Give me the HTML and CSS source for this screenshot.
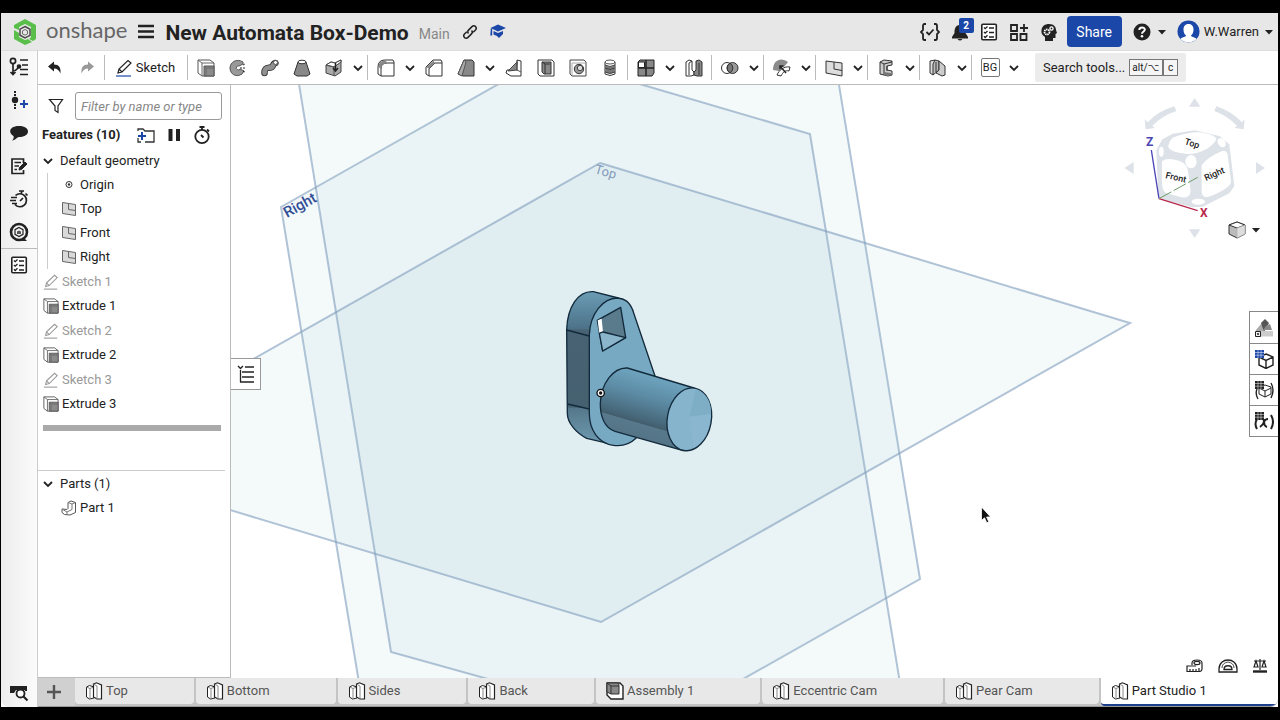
FILE: index.html
```html
<!DOCTYPE html>
<html lang="en">
<head>
<meta charset="utf-8">
<title>New Automata Box-Demo</title>
<link rel="stylesheet" href="styles.css">
</head>
<body>
<svg class="sprite" aria-hidden="true">
  <defs>
    <symbol id="chev" viewBox="0 0 12 12"><path d="M2 4l4 4 4-4" fill="none" stroke="#222" stroke-width="1.800"/></symbol>
    <symbol id="caret" viewBox="0 0 8 8"><path d="M0 2h8L4 6.500z" fill="#222"/></symbol>
    <symbol id="plane" viewBox="0 0 16 16"><path d="M1.500 1.500l13 2v11l-13-2z" fill="#d9d9d9" stroke="#666"/><path d="M7.500 2.500v6l7 1" fill="none" stroke="#666"/></symbol>
    <symbol id="extrude" viewBox="0 0 18 18"><path d="M1 1h12l4 3v13H5l-4-3z" fill="#fff" stroke="#555"/><path d="M1 1l4 3h12M5 4v13" fill="none" stroke="#666"/><path d="M7 7h10v10H7z" fill="#8b8b8b" stroke="#555"/><path d="M7 7l2 2h8M9 9v8" fill="none" stroke="#666"/></symbol>
    <symbol id="pencil" viewBox="0 0 18 18"><path d="M3 14l1-4L13 1.500l3 2.500-9 9zM4 10l3 3" fill="#fff" stroke="currentColor" stroke-width="1.200"/><path d="M1 17h15" stroke="var(--line, currentColor)" stroke-width="1.200"/></symbol>
    <symbol id="studio" viewBox="0 0 18 18"><path d="M1.500 5l3-1.500L9 5v11l-4.500 1-3-2z" fill="#fff" stroke="#222"/><path d="M1.500 5L5 6.500V17M5 6.500L9 5" fill="none" stroke="#888"/><path d="M8.500 2l3-1.200L16.500 3v14h-4.500l-3.500-2z" fill="#fff" stroke="#222" stroke-width="1.200"/><path d="M8.500 2L12 4v13" fill="none" stroke="#888"/></symbol>
    <symbol id="checklist" viewBox="0 0 18 18"><rect x="1.800" y="1.300" width="14.500" height="15.500" rx="1" fill="#fff" stroke="#222" stroke-width="1.600"/><path d="M4 4.500l1.200 1.200L7.500 3.500M4 9l1.200 1.200L7.500 8M4 13.300l1.200 1.200 2.300-2.200" fill="none" stroke="#222" stroke-width="1.300"/><path d="M9 5h5M9 9.500h5M9 14h5" stroke="#222" stroke-width="1.500"/></symbol>
    <symbol id="watch" viewBox="0 0 20 20"><circle cx="10" cy="11.500" r="6.700" fill="none" stroke="#222" stroke-width="1.800"/><path d="M7.500 2h5M10 2v3M15 4.500l2 2M9 10l2.500 2.500" stroke="#222" stroke-width="1.800"/></symbol>
  </defs>
</svg>

<div class="app">
  <header class="header">
    <a class="brand" href="#" aria-label="Onshape home">
      <svg width="26" height="28" viewBox="0 0 26 28"><path d="M13 1l11 6v14l-3 2-4-2 2-2V9l-6-3-6 3v3L2 10V7z" fill="#59bf4a"/><path d="M2 12l5 3v4l6 3 3-1 4 3-7 3L2 21z" fill="#59bf4a"/><path d="M13 8.500l5 2.800v6L13 20l-5-2.800v-6z" fill="#e7e7e7" stroke="#4a4a4a" stroke-width="1.500"/><path d="M13 11.500l2.500 1.400v3L13 17.200l-2.500-1.300v-3z" fill="none" stroke="#666"/></svg>
      <span class="brand-name">onshape</span>
    </a>
    <button class="icon-btn menu" aria-label="Menu"><svg width="18" height="18" viewBox="0 0 18 18"><path d="M1 3h16M1 8.500h16M1 14h16" stroke="#222" stroke-width="2.400"/></svg></button>
    <h1 class="title">New Automata Box-Demo</h1>
    <span class="branch">Main</span>
    <button class="icon-btn link" aria-label="Copy link"><svg width="16" height="16" viewBox="0 0 16 16" fill="none" stroke="#222" stroke-width="1.500"><path d="M6.500 9.500c-1-1-1-2.400 0-3.400l3.500-3.500c1-1 2.600-1 3.500 0s1 2.400 0 3.400L11.200 8.300"/><path d="M9.500 6.500c1 1 1 2.400 0 3.400L6 13.400c-1 1-2.600 1-3.500 0s-1-2.400 0-3.400l2.300-2.300"/></svg></button>
    <button class="icon-btn" aria-label="Learning center"><svg width="18" height="18" viewBox="0 0 18 18" fill="#1b47a8"><path d="M9 1.500l8 3.500-8 3.500L1.500 5z"/><path d="M4.500 8L9 10l5-2v3l-4 4-2-2-3.500-1.500zM1.800 5.500h1.400v7H1.300z"/></svg></button>
    <div class="header-tools">
      <button class="icon-btn" aria-label="Checks"><svg width="20" height="20" viewBox="0 0 20 20" fill="none" stroke="#222" stroke-width="1.800"><path d="M6 2H4.500Q3 2 3 4v4L1 10l2 2v4q0 2 1.500 2H6M14 2h1.500Q17 2 17 4v4l2 2-2 2v4q0 2-1.500 2H14"/><path d="M6.500 10l2.500 2.500 4.500-5"/></svg></button>
      <button class="icon-btn bell" aria-label="Notifications, 2 new"><svg width="18" height="20" viewBox="0 0 18 20" fill="#222"><path d="M8 2c1-1 2 0 2 1 4 1 4.500 4 4.500 8l2.500 4v1.500H1V15l2.500-4C3.500 7 4 4 8 3zM6.500 17h5q-2.500 3-5 0z"/></svg><span class="badge">2</span></button>
      <button class="icon-btn" aria-label="Tasks"><svg width="18" height="18"><use href="#checklist"/></svg></button>
      <button class="icon-btn" aria-label="App store"><svg width="20" height="20" viewBox="0 0 20 20" fill="none" stroke="#222" stroke-width="1.800"><path d="M2 3h6v6H2zM2 12h6v6H2zM11.500 12h6v6h-6zM11 6h8M15 2v8"/></svg></button>
      <button class="icon-btn" aria-label="Advisor"><svg width="18" height="20" viewBox="0 0 18 20"><path d="M9 2c5 0 7 3 7 6l1 3-1.500 1v4H13v3H5v-4C2 13 1 11 1.500 8 2 4 5 2 9 2z" fill="#222"/><circle cx="7" cy="10" r="2.500" fill="none" stroke="#fff" stroke-width="1.800" stroke-dasharray="1.500 .6"/><circle cx="11.500" cy="6.500" r="1.600" fill="none" stroke="#fff" stroke-width="1.300"/></svg></button>
      <button class="share">Share</button>
      <button class="help" aria-label="Help"><svg width="18" height="18" viewBox="0 0 18 18"><circle cx="9" cy="9" r="8.500" fill="#222"/><path d="M6.300 7c0-3.500 5.500-3.300 5.500-.3C11.800 8.500 9 8.500 9 10.800" fill="none" stroke="#fff" stroke-width="2"/><circle cx="9" cy="13.300" r="1.300" fill="#fff"/></svg><svg width="8" height="8"><use href="#caret"/></svg></button>
      <button class="user"><svg width="23" height="23" viewBox="0 0 23 23"><circle cx="11.500" cy="11.500" r="11" fill="#1b47a8"/><path d="M11.500 4c7 0 5.500 10 2.500 11.500 0 1.500 4 1.500 5.500 3.500-4 4.500-12 4.500-16 0 1.500-2 5.500-2 5.500-3.500C6 14 4.500 4 11.500 4z" fill="#fff"/></svg><span>W.Warren</span><svg width="8" height="8"><use href="#caret"/></svg></button>
    </div>
  </header>

  <nav class="rail" aria-label="Side panels">
    <button class="rail-btn first" aria-label="Feature list"><svg width="20" height="20" viewBox="0 0 20 20" fill="none" stroke="#222" stroke-width="1.700"><circle cx="4" cy="4" r="2.600"/><path d="M4 7v10M4 14c4 0 4-3 7-5M1.500 15L4 17.500 6.500 15M11 3h8M13 8h6M11 12.500h8M11 17.500h8"/><circle cx="10" cy="9.500" r="1.500" fill="#222"/></svg></button>
    <button class="rail-btn" aria-label="Add variable"><svg width="20" height="20" viewBox="0 0 20 20"><path d="M6 1v2M6 4v2M6 14v2M6 17v2" stroke="#222" stroke-width="2"/><circle cx="6" cy="10" r="3.200" fill="#222"/><path d="M11 14h8M15 10v8" stroke="#1b47a8" stroke-width="2"/></svg></button>
    <button class="rail-btn" aria-label="Comments"><svg width="20" height="18" viewBox="0 0 20 18"><path d="M10 2c12 0 12 11 0 11-2 0-3 3-7 3.500 1.500-1.500 2-3 1.500-4.500C-1 9 0 2 10 2z" fill="#222"/></svg></button>
    <button class="rail-btn" aria-label="Notes"><svg width="18" height="18" viewBox="0 0 18 18" fill="none" stroke="#222" stroke-width="1.700"><path d="M13.500 6V2H2v14.500h11.500V13M4.500 5.500H11M4.500 9H9M4.500 12.500H7"/><path d="M9 13l.5-2.500L15 5l2 2-5.500 5.500z" fill="#222" stroke-width="1"/></svg></button>
    <button class="rail-btn" aria-label="Performance"><svg width="20" height="20" viewBox="0 0 20 20" fill="none" stroke="#222" stroke-width="1.700"><path d="M6.500 6.500A6.500 6.500 0 1 1 6 15.500M10 2h5M12.500 2v3M16.500 4.500l2 2M11 12l3-3M2 8.500h6M1 11.500h6M3 14.500h5"/></svg></button>
    <button class="rail-btn" aria-label="Help search"><svg width="20" height="20" viewBox="0 0 20 20"><circle cx="10" cy="10" r="8" fill="none" stroke="#222" stroke-width="2.600"/><path d="M14 15l4 4h-5" fill="#222"/><path d="M10 5.500l4 2.200v4.600l-4 2.200-4-2.200V7.700z" fill="none" stroke="#222" stroke-width="1.200"/><path d="M10 8.500l2 1v2.500H8V9.500z" fill="#555"/></svg></button>
    <button class="rail-btn ruled" aria-label="Checklist"><svg width="18" height="18"><use href="#checklist"/></svg></button>
    <button class="rail-btn last" aria-label="Search tabs"><svg width="20" height="18" viewBox="0 0 20 18"><path d="M1 2h17v5h-2V6H7l-2 3H1z" fill="#222"/><circle cx="11.500" cy="9.500" r="4" fill="#fff" stroke="#222" stroke-width="1.800"/><path d="M14.500 12.500l4 4" stroke="#222" stroke-width="2.200"/></svg></button>
  </nav>

  <div class="toolbar" role="toolbar" aria-label="Part studio tools">
    <button class="tool" aria-label="Undo"><svg width="16" height="16" viewBox="0 0 16 16"><path d="M1 6.500L7 1.500v3c5 0 7 3 6.500 9C12 10 10 8.500 7 8.500v3z" fill="#222"/></svg></button>
    <button class="tool" aria-label="Redo"><svg width="16" height="16" viewBox="0 0 16 16"><path d="M15 6.500L9 1.500v3c-5 0-7 3-6.500 9C4 10 6 8.500 9 8.500v3z" fill="#999"/></svg></button>
    <i class="sep"></i>
    <button class="sketch"><svg width="18" height="18"><use href="#pencil"/></svg>Sketch</button>
    <i class="sep"></i>
    <button class="tool" aria-label="Extrude"><svg width="18" height="18"><use href="#extrude"/></svg></button>
    <button class="tool" aria-label="Revolve"><svg width="18" height="18" viewBox="0 0 18 18"><path d="M14 3C8-1 1 3 1 9s6 10 12 6l2-3-4-2a2 2 0 1 1-1-3l4-2z" fill="#999" stroke="#555"/><path d="M11 9h6M14 6l2-1M14 12l2 1" stroke="#222" stroke-dasharray="2 1"/></svg></button>
    <button class="tool" aria-label="Sweep"><svg width="18" height="18" viewBox="0 0 18 18"><path d="M3.500 14c0-6 3-5 6-5.500 3 0 2-4 5-4.500" fill="none" stroke="#333" stroke-width="6.500" stroke-linecap="round"/><path d="M3.500 14c0-6 3-5 6-5.500 3 0 2-4 5-4.500" fill="none" stroke="#909090" stroke-width="4.800" stroke-linecap="round"/><circle cx="14.500" cy="3.500" r="2" fill="#fff" stroke="#555"/></svg></button>
    <button class="tool" aria-label="Loft"><svg width="18" height="18" viewBox="0 0 18 18"><path d="M5 3l-4 12 3 2h10l3-2-4-12z" fill="#888" stroke="#333"/><ellipse cx="9" cy="3" rx="4" ry="1.800" fill="#fff" stroke="#333"/></svg></button>
    <button class="tool" aria-label="Thicken"><svg width="18" height="18" viewBox="0 0 18 18"><path d="M1 6l5-3 4 1 6-3v12l-6 4-9-3z" fill="#aaa" stroke="#444"/><path d="M1 6l5-3 4 1 6-3v2L9 8z" fill="#fff" stroke="#444"/><path d="M1 6l8 2v9" fill="none" stroke="#555"/><path d="M10.500 4v7M8 9l2.500 3L13 9" fill="none" stroke="#222" stroke-width="1.500"/></svg></button>
    <button class="drop" aria-label="More solids"><svg width="12" height="12"><use href="#chev"/></svg></button>
    <i class="sep"></i>
    <button class="tool" aria-label="Fillet"><svg width="18" height="18" viewBox="0 0 18 18"><path d="M1 8q0-7 7-7h8l1 2v14H4l-3-2z" fill="#fff" stroke="#333"/><path d="M4 17v-7q0-6 6-6h7" fill="none" stroke="#333"/><path d="M1.500 8q0-6.500 7-6.500l2 2.500Q4 4 4 10z" fill="#888"/></svg></button>
    <button class="drop" aria-label="More fillets"><svg width="12" height="12"><use href="#chev"/></svg></button>
    <button class="tool" aria-label="Chamfer"><svg width="18" height="18" viewBox="0 0 18 18"><path d="M1 8l7-7h8l1 2v14H4l-3-2z" fill="#fff" stroke="#333"/><path d="M4 17v-7l6-6h7" fill="none" stroke="#333"/><path d="M1.500 8l7-6.500 1.500 2.500-6 6z" fill="#888"/></svg></button>
    <button class="tool" aria-label="Draft"><svg width="18" height="18" viewBox="0 0 18 18"><path d="M7 1h8l2 2v14H6l-5-2z" fill="#888" stroke="#333"/><path d="M1 15L7 1l2 2-4 14z" fill="#aaa" stroke="#555"/></svg></button>
    <button class="drop" aria-label="More drafts"><svg width="12" height="12"><use href="#chev"/></svg></button>
    <button class="tool" aria-label="Rib"><svg width="18" height="18" viewBox="0 0 18 18"><path d="M12 1l4 1v15H6l-5-3 1-3h5l5-5z" fill="#fff" stroke="#333"/><path d="M12 3v8l-9 1z" fill="#888" stroke="#444"/><path d="M12 11l4 2M12 2v10" stroke="#555"/></svg></button>
    <button class="tool" aria-label="Shell"><svg width="18" height="18" viewBox="0 0 18 18"><path d="M1 1h14l2 2v14H3l-2-2z" fill="#fff" stroke="#333"/><path d="M5 3h9v12H7l-2-2z" fill="#888" stroke="#333"/><path d="M5 3l3 2v10M8 5h5" fill="none" stroke="#333"/></svg></button>
    <button class="tool" aria-label="Hole"><svg width="18" height="18" viewBox="0 0 18 18"><path d="M1 1h14l2 2v14H3l-2-2z" fill="#fff" stroke="#444"/><path d="M3 4h13M3 4v12" stroke="#aaa"/><circle cx="10" cy="10" r="4.700" fill="#999" stroke="#333"/><circle cx="11" cy="9" r="2.700" fill="#ddd" stroke="#444"/></svg></button>
    <button class="tool" aria-label="External thread"><svg width="18" height="18" viewBox="0 0 18 18"><path d="M4 3v12q5 3 10 0V3z" fill="#fff" stroke="#333"/><path d="M4 6q5 3 10 0v7q-5 3-10 0z" fill="#777"/><path d="M4 6q5 3 10 0M4 9q5 3 10 0M4 13q5 3 10 0" fill="none" stroke="#444"/><ellipse cx="9" cy="3" rx="5" ry="2" fill="#fff" stroke="#555"/></svg></button>
    <i class="sep"></i>
    <button class="tool" aria-label="Linear pattern"><svg width="18" height="18" viewBox="0 0 18 18" stroke="#222"><path d="M1 3l2-2h14v13l-2 3H1z" fill="#888"/><path d="M1.500 3h6v5.500h-6z" fill="#fff"/><path d="M9 1v16M1 9h16" stroke-width="1.500"/></svg></button>
    <button class="drop" aria-label="More patterns"><svg width="12" height="12"><use href="#chev"/></svg></button>
    <button class="tool" aria-label="Mirror"><svg width="18" height="18" viewBox="0 0 18 18" stroke="#333"><path d="M1 3l3-2 3 1v9l2 2v3l-3 1H1z" fill="#fff"/><path d="M4 4v12M4 4l3-2"/><path d="M17 3l-3-2-3 1v9l-2 2v3l3 1h5z" fill="#888"/><path d="M14 4v12"/></svg></button>
    <i class="sep"></i>
    <button class="tool" aria-label="Boolean"><svg width="18" height="18" viewBox="0 0 18 18" stroke="#333"><circle cx="6" cy="9" r="5.500" fill="#fff"/><circle cx="11.500" cy="9" r="5.500" fill="#999"/><path d="M9 4.200a5.500 5.500 0 0 1 0 9.600 5.500 5.500 0 0 1 0-9.600z" fill="#777"/></svg></button>
    <button class="drop" aria-label="More booleans"><svg width="12" height="12"><use href="#chev"/></svg></button>
    <i class="sep"></i>
    <button class="tool" aria-label="Move face"><svg width="18" height="18" viewBox="0 0 18 18"><path d="M0 11C0 0 9-2 15 3l-4 5c-3-1-4 2-5 4z" fill="#8b8b8b"/><path d="M4 16c2-5 7-9 13-8l-1 4c-4-1-6 1-8 5z" fill="#fff" stroke="#333"/><path d="M13 14L7 7M7 10.500V7h3.500" fill="none" stroke="#222" stroke-width="1.500"/></svg></button>
    <button class="drop" aria-label="More edits"><svg width="12" height="12"><use href="#chev"/></svg></button>
    <i class="sep"></i>
    <button class="tool" aria-label="Plane"><svg width="18" height="18" viewBox="0 0 18 18"><path d="M1 2l16 2v13L1 14z" fill="#ddd" stroke="#333"/><path d="M9 3v7l8 1.500" fill="none" stroke="#333"/></svg></button>
    <button class="drop" aria-label="More planes"><svg width="12" height="12"><use href="#chev"/></svg></button>
    <i class="sep"></i>
    <button class="tool" aria-label="Frame"><svg width="18" height="18" viewBox="0 0 18 18"><path d="M3 3l4-2 8 1v4l-5 1v4l5 1v4l-4 1-8-2z" fill="#ccc" stroke="#333"/><path d="M3 3l4 2v11M7 5l8-2M10 7v5" fill="none" stroke="#333"/><path d="M7 13l7 1v2l-3 1-4-1z" fill="#777"/></svg></button>
    <button class="drop" aria-label="More frames"><svg width="12" height="12"><use href="#chev"/></svg></button>
    <i class="sep"></i>
    <button class="tool" aria-label="Sheet metal"><svg width="18" height="18" viewBox="0 0 18 18" stroke="#333"><path d="M1 2l5-1v10l-2 5-3-2z" fill="#ddd"/><path d="M6 1l4 1v9l-6 5V5z" fill="#bbb"/><path d="M10 2l6 5v9l-3 1-6-3 3-3z" fill="#ccc"/><path d="M7 3v10"/></svg></button>
    <button class="drop" aria-label="More sheet metal"><svg width="12" height="12"><use href="#chev"/></svg></button>
    <i class="sep"></i>
    <button class="tool"><span class="custom">BG</span></button>
    <button class="drop" aria-label="More custom features"><svg width="12" height="12"><use href="#chev"/></svg></button>
    <button class="search">Search tools... <span class="keys"><kbd>alt/⌥</kbd><kbd>c</kbd></span></button>
  </div>

  <aside class="panel">
    <div class="filter">
      <svg width="16" height="16" viewBox="0 0 16 16"><path d="M1.500 1.500h13L10 8v6.500l-3-2V8z" fill="none" stroke="#222" stroke-width="1.200"/></svg>
      <input type="text" placeholder="Filter by name or type" aria-label="Filter by name or type">
    </div>
    <div class="panel-head">
      <h2>Features (10)</h2>
      <button class="icon-btn" aria-label="New folder"><svg width="20" height="18" viewBox="0 0 20 18"><path d="M2 5V3h5l2 2h9v11H9M2 12v4h3" fill="none" stroke="#333" stroke-width="1.300"/><path d="M2 10h8M6 6v8" stroke="#1b47a8" stroke-width="2"/></svg></button>
      <button class="icon-btn" aria-label="Pause"><svg width="20" height="18" viewBox="0 0 20 18"><path d="M4.500 3h4v12h-4zM12 3h4v12h-4z" fill="#222"/></svg></button>
      <button class="icon-btn" aria-label="Timing"><svg width="20" height="20"><use href="#watch"/></svg></button>
    </div>
    <ul class="tree">
      <li class="group">
        <div class="row"><svg width="12" height="12"><use href="#chev"/></svg>Default geometry</div>
        <ul class="children">
          <li class="row"><svg width="16" height="16" viewBox="0 0 16 16"><circle cx="8" cy="7.500" r="3" fill="none" stroke="#333"/><circle cx="8" cy="7.500" r="1.200" fill="#333"/></svg>Origin</li>
          <li class="row"><svg width="16" height="16"><use href="#plane"/></svg>Top</li>
          <li class="row"><svg width="16" height="16"><use href="#plane"/></svg>Front</li>
          <li class="row"><svg width="16" height="16"><use href="#plane"/></svg>Right</li>
        </ul>
      </li>
      <li><div class="row muted"><svg width="16" height="16"><use href="#pencil"/></svg>Sketch 1</div><div class="row"><svg width="16" height="16"><use href="#extrude"/></svg>Extrude 1</div></li>
      <li><div class="row muted"><svg width="16" height="16"><use href="#pencil"/></svg>Sketch 2</div><div class="row"><svg width="16" height="16"><use href="#extrude"/></svg>Extrude 2</div></li>
      <li><div class="row muted"><svg width="16" height="16"><use href="#pencil"/></svg>Sketch 3</div><div class="row"><svg width="16" height="16"><use href="#extrude"/></svg>Extrude 3</div></li>
    </ul>
    <div class="rollback"></div>
    <ul class="parts">
      <li class="row"><svg width="12" height="12"><use href="#chev"/></svg>Parts (1)</li>
      <li class="row nested"><svg width="16" height="16" viewBox="0 0 16 16"><path d="M7 2.500l3-1.500 4.500 1.500v10L9 15l-5.500-.5L1 12.500V9l5 .5 1-1z" fill="#fff" stroke="#555"/><path d="M7 2.500l4 1.500v5.500l-5 2.500-5-3M11 4l3.500-1.500M6 12v2.500" fill="none" stroke="#777"/></svg>Part 1</li>
    </ul>
  </aside>

  <main class="viewport">
    <svg class="scene" viewBox="231 85 1047 593" preserveAspectRatio="xMidYMid slice" role="img" aria-label="Part 1 with default planes">
      <defs>
        <linearGradient id="side" x1="0" y1="0" x2="0" y2="1"><stop offset="0" stop-color="#6b9cb5"/><stop offset=".24" stop-color="#4c7288"/><stop offset=".25" stop-color="#486273"/><stop offset=".75" stop-color="#45606f"/><stop offset=".76" stop-color="#55788b"/><stop offset="1" stop-color="#6f9cb2"/></linearGradient>
        <linearGradient id="barrel" gradientUnits="userSpaceOnUse" x1="360" y1="320" x2="305" y2="510"><stop offset="0" stop-color="#6fa5c0"/><stop offset=".35" stop-color="#5c8ba4"/><stop offset=".7" stop-color="#466678"/><stop offset=".76" stop-color="#425d6c"/><stop offset=".77" stop-color="#57798b"/><stop offset="1" stop-color="#547486"/></linearGradient>
      </defs>
      <g class="planes">
        <path d="M281 207L810-92 920 579 391 878z"/>
        <path d="M282-21L810 134 919 799 391 652z"/>
        <path d="M600 163L1130 323 601 622 71 462z"/>
      </g>
      <text class="plane-name" transform="translate(287 218) rotate(-29)">Right</text>
      <text class="plane-name faint" transform="translate(594 173) rotate(16)">Top</text>
      <g class="part" transform="translate(540 270) scale(.3333)">
        <path d="M80 180C82 110 115 62 160 65L235 84 278 120 230 526 140 505C110 490 82 460 82 430z" fill="url(#side)"/>
        <path d="M80 180l68 18M82 402l66 15" fill="none"/>
        <path d="M148 195C150 130 190 84 232 84 255 86 268 95 278 120L345 318 288 505C270 522 245 530 220 526 175 520 148 480 148 430z" fill="#78a9c3"/>
        <path d="M172 151L242 112 257 203 188 243z" fill="#5a7b8c"/>
        <path d="M173 151l12-5 4 40-11 4z" fill="#fff" stroke="none"/>
        <path d="M178 190l11-4 68 17-69 40z" fill="#8bb5cb" stroke-width="2"/>
        <path d="M262 294L462 354 430 542 225 484C195 475 180 440 181 400 183 340 220 292 262 294z" fill="url(#barrel)"/>
        <ellipse cx="448" cy="448" rx="66" ry="95" transform="rotate(10 448 448)" fill="#86b4cd"/>
        <path d="M448 440l20-82c36 12 48 48 44 74z" fill="#7eadc6" stroke="none"/>
        <path d="M448 440l14 92c28-12 46-46 50-100z" fill="#8ab7cf" stroke="none"/>
        <circle cx="182" cy="369" r="10" fill="#111" stroke="#111" stroke-width="6"/><circle cx="182" cy="369" r="7" fill="#111" stroke="#fff" stroke-width="4"/>
      </g>
      <path d="M981.500 507v13.500l3-2.700 2.300 5 2-1-2.200-4.800h4z" fill="#111" stroke="#fff" stroke-width=".8"/>
    </svg>

    <button class="flyout" aria-label="Toggle feature list"><svg width="18" height="18" viewBox="0 0 18 18" fill="none" stroke="#222" stroke-width="1.300"><path d="M1 1l2.500 2.500L6 1M3.500 5v12M8 2h9M5 7h12M5 12h12M3 17h14"/></svg></button>

    <div class="cube">
      <svg width="170" height="160" viewBox="0 0 170 160">
        <g transform="scale(.3333)" fill="#dde2e8">
          <path d="M254 24l17 26h-34zM254 444l17-26h-34zM43 234l28-18v36zM465 234l-27-18v36zM104 88l3 30 27-4-7-7q30-30 72-44l-6-14q-48 14-80 48zM404 88l-3 30-27-4 7-7q-30-30-68-44l6-14q44 14 77 48z"/>
          <path d="M188 131l66-10 76 18 28 24 15 125-15 22-80 40-30 2-88-22-15-10-6-140 18-32z"/>
          <g fill="#fff"><path d="M188 143q60-23 95-14 34 7 36 18-2 10-25 28-36 20-66 16-48-5-53-20 0-15 13-28zM156 214q15-14 55 0 20 8 23 30l8 58q-2 24-28 20l-46-13q-10-5-12-28zM275 225q20-25 60-41 15-5 18 10l10 80q0 12-18 23-30 18-52 24-16 3-18-15z"/><ellipse cx="243" cy="215" rx="17" ry="20"/><ellipse cx="265" cy="335" rx="20" ry="9"/><ellipse cx="154" cy="185" rx="7" ry="15"/><ellipse cx="335" cy="158" rx="11" ry="15" transform="rotate(-35 335 158)"/></g>
          <path d="M124 180l23 146" stroke="#4b45b5" stroke-width="4"/><path d="M147 326l116 36" stroke="#b8284c" stroke-width="4"/><path d="M147 326l116-64" stroke="#6c9b64" stroke-width="3" stroke-dasharray="42 8"/>
        </g>
        <text class="face" transform="translate(74 54) rotate(18)">Top</text>
        <text class="face" transform="translate(55 88) rotate(13)">Front</text>
        <text class="face" transform="translate(96 91) rotate(-24)">Right</text>
        <text class="axis z" x="36" y="56">Z</text>
        <text class="axis x" x="90" y="127">X</text>
      </svg>
    </div>
    <button class="view-menu" aria-label="View options"><svg width="18" height="18" viewBox="0 0 18 18" stroke="#333"><path d="M1 4l8-3 8 3v9l-8 4-8-4z" fill="#bbb"/><path d="M1 4l8 3 8-3-8-3z" fill="#fff"/><path d="M9 7v10l8-4V4z" fill="#ddd" stroke="#aaa" stroke-width=".6"/></svg><svg width="8" height="8"><use href="#caret"/></svg></button>

    <div class="dock">
      <button aria-label="Appearance"><svg width="20" height="20" viewBox="0 0 20 20"><path d="M2 12l5-6 4 3-4 10H2z" fill="#aaa"/><path d="M7 5l4-4 4 4-5 9z" fill="#555"/><path d="M12 8l4-2 2 6H9z" fill="#888"/><path d="M7 13h12v5.500H7z" fill="#ccc"/><path d="M1.500 13.500h5v5h-5z" fill="#eee" stroke="#222"/><circle cx="4" cy="16" r="1" fill="#222"/></svg></button>
      <button aria-label="Configurations"><svg width="20" height="20" viewBox="0 0 20 20"><path d="M12 5l7 3v8l-7 3.500L5 16V8zM5 8l7 3.500L19 8M12 11.500v8" fill="#fff" stroke="#222" stroke-width="1.400"/><path d="M1 1h9v8H1z" fill="#1b47a8"/><path d="M1 3.500h9M1 6.200h9M4 1v8M7 1v8" stroke="#fff" stroke-width=".5"/></svg></button>
      <button aria-label="Custom tables"><svg width="20" height="20" viewBox="0 0 20 20"><path d="M11 5l6 2v7l-6 3-6-3V7zM5 8l6 3 6-3M11 11v6" fill="#fff" stroke="#222"/><path d="M3 9q-2 5 1 10M17 3q4 7 0 15" fill="none" stroke="#222" stroke-width="1.400"/><path d="M1 1h9v8H1z" fill="#222"/><path d="M1 3.500h9M1 6.200h9M4 1v8M7 1v8" stroke="#fff" stroke-width=".5"/></svg></button>
      <button aria-label="Variables"><svg width="20" height="20" viewBox="0 0 20 20"><path d="M3 8q-3 5 0 10M17 4q4 7 0 14" fill="none" stroke="#222" stroke-width="2"/><path d="M7 8q3-1 3 3t3 5M14 8q-3 0-4 3t-4 5" fill="none" stroke="#222" stroke-width="2"/><path d="M1 1h9v8H1z" fill="#222"/><path d="M1 3.500h9M1 6.200h9M4 1v8M7 1v8" stroke="#fff" stroke-width=".5"/></svg></button>
    </div>

    <div class="measure">
      <button class="icon-btn" aria-label="Measure"><svg width="17" height="14" viewBox="0 0 17 14" fill="none" stroke="#222" stroke-width="1.200"><path d="M6 6V4q0-3 5-3t5 3v6q0 2-2 2.500H1V7h9"/><ellipse cx="11" cy="4" rx="3" ry="1.600"/><path d="M4 12v-2M7 12v-2M10 12v-2M13 12V9"/></svg></button>
      <button class="icon-btn" aria-label="Protractor"><svg width="20" height="14" viewBox="0 0 20 14" fill="none" stroke="#222" stroke-width="1.300"><path d="M1 13V10C1-2 19-2 19 10v3z"/><path d="M6 10.500c0-5 8-5 8 0z"/><path d="M4 9q0-5 6-6 6 1 6 6" stroke-width=".8"/></svg></button>
      <button class="icon-btn" aria-label="Mass properties"><svg width="14" height="14" viewBox="0 0 14 14" fill="none" stroke="#222" stroke-width="1.200"><path d="M7 0v11M1 2h12M3 2L1 8h4zM11 2L9 8h4z"/><path d="M0 12.500h14" stroke-width="2.400"/></svg></button>
    </div>
  </main>

  <nav class="tabs" aria-label="Document tabs">
    <button class="add" aria-label="Add tab"><svg width="16" height="16" viewBox="0 0 16 16"><path d="M1 8h14M8 1v14" stroke="#555" stroke-width="2.400"/></svg></button>
    <button class="tab"><svg width="18" height="18"><use href="#studio"/></svg>Top</button>
    <button class="tab"><svg width="18" height="18"><use href="#studio"/></svg>Bottom</button>
    <button class="tab"><svg width="18" height="18"><use href="#studio"/></svg>Sides</button>
    <button class="tab"><svg width="18" height="18"><use href="#studio"/></svg>Back</button>
    <button class="tab"><svg width="18" height="18" viewBox="0 0 18 18"><path d="M1 1h13l3 3v13H5l-4-4z" fill="#fff" stroke="#222" stroke-width="1.400"/><path d="M1 1h11l1 2v9H5l-4-2z" fill="#888" stroke="#333"/><path d="M1 1l4 3h8M5 4v8" stroke="#333" fill="none"/></svg>Assembly 1</button>
    <button class="tab"><svg width="18" height="18"><use href="#studio"/></svg>Eccentric Cam</button>
    <button class="tab"><svg width="18" height="18"><use href="#studio"/></svg>Pear Cam</button>
    <button class="tab active" aria-current="page"><svg width="18" height="18"><use href="#studio"/></svg>Part Studio 1</button>
  </nav>
</div>
</body>
</html>
```
FILE: styles.css
```css
* { box-sizing: border-box; }
body { margin: 0; background: #000; color: #222; font: 13px/16px Roboto, "Noto Sans", sans-serif; }
button { border: 0; padding: 0; margin: 0; background: none; color: inherit; font: inherit; display: flex; align-items: center; justify-content: center; }
h1, h2, ul { margin: 0; padding: 0; }
ul { list-style: none; }
svg { display: block; flex: none; }
.sprite { position: absolute; width: 0; height: 0; }

.app {
  height: calc(100vh - 13px);
  min-height: 560px;
  border: 0 solid #000;
  border-width: 0 2px 13px 1px;
  margin-top: 13px;
  display: grid;
  grid-template: 38px 34px 1fr 29px / 37px 193px 1fr;
  grid-template-areas: "head head head" "rail tools tools" "rail panel view" "rail tabs tabs";
  overflow: hidden;
  background: #fff;
}

.header { grid-area: head; display: flex; align-items: center; background: #e7e7e7; padding: 0 5px 0 11px; border-bottom: 1px solid #ddd; }
.brand { display: flex; align-items: center; gap: 8px; text-decoration: none; color: #666; }
.brand-name { font: 22px/28px Lato, sans-serif; padding-bottom: 3px; }
.menu { margin-left: 10px; }
.title { font-size: 21px; line-height: 28px; font-weight: 700; margin-left: 10px; padding-top: 2px; white-space: nowrap; }
.branch { font-size: 14px; color: #888; margin-left: 10px; padding-top: 5px; }
.link { margin: 0 11px 0 12px; }
.header-tools { margin-left: auto; display: flex; align-items: center; gap: 11px; }
.bell { position: relative; }
.badge { position: absolute; left: 8px; top: -4px; width: 15px; height: 15px; border-radius: 2px; background: #1b47a8; color: #fff; font-size: 10px; line-height: 15px; font-weight: 700; text-align: center; }
.share { width: 55px; height: 31px; margin-left: -2px; border-radius: 4px; background: #1b47a8; color: #fff; font-size: 14px; }
.help { gap: 7px; }
.user { gap: 4px; white-space: nowrap; }
.user span { margin-right: 2px; }

.rail { grid-area: rail; display: flex; flex-direction: column; background: linear-gradient(90deg, #ededed, #fbfbfb); border-right: 1px solid #ccc; border-bottom-left-radius: 8px; }
.rail-btn { height: 33px; width: 100%; }
.first { height: 32px; }
.ruled { border-top: 1px solid #bbb; }
.last { margin-top: auto; height: 28px; }

.toolbar { grid-area: tools; display: flex; align-items: center; border-bottom: 1px solid #bbb; overflow: hidden; }
.tool { width: 32px; height: 32px; flex: none; }
.tool:first-child { width: 33px; }
.drop { width: 16px; height: 32px; flex: none; }
.sep { width: 4px; height: 25px; flex: none; border-left: 1px solid #bbb; margin: 0 -1px 0 1px; }
.sketch { width: 79px; flex: none; gap: 3px; padding-right: 3px; --line: #1b47a8; }
.custom { border: 1px solid #777; border-radius: 2px; width: 19px; height: 19px; font-size: 11px; line-height: 17px; }
.search { flex: none; margin-left: 13px; height: 29px; padding: 0 8px; background: #ececec; border-radius: 2px; gap: 4px; }
.keys { display: flex; }
kbd { border: 1px solid #777; background: #f5f5f5; font: 10px/15px Roboto, "DejaVu Sans", sans-serif; padding: 0 3px 0 2px; height: 17px; }
kbd:last-child { padding: 0 4px; }

.panel { grid-area: panel; border-right: 1px solid #bbb; border-bottom: 1px solid #bbb; overflow: hidden; }
.filter { display: flex; align-items: center; gap: 11px; padding: 7px 8px 0 10px; }
.filter input { flex: 1; min-width: 0; height: 28px; border: 1px solid #999; border-radius: 3px; padding: 0 5px; font: italic 13px/16px Roboto, sans-serif; }
.filter input::placeholder { color: #888; opacity: 1; }
.panel-head { display: flex; align-items: center; height: 29px; padding-left: 4px; gap: 8px; }
.panel-head h2 { font-size: 13px; line-height: 16px; font-weight: 700; width: 86px; }
.tree { display: flex; flex-direction: column; gap: 1px; }
.row { display: flex; align-items: center; gap: 3px; height: 24px; padding-left: 5px; }
.group > .row, .parts > .row:first-child { gap: 6px; padding-left: 4px; }
.children { margin-left: 9px; border-left: 1px solid #ccc; }
.children .row { padding-left: 13px; }
.muted { color: #999; }
.rollback { margin: 9px 9px 39px 5px; height: 6px; background: #aaa; }
.parts { border-top: 1px solid #ccc; margin-right: 5px; padding-top: 1px; }
.nested { padding-left: 23px; }

.viewport { grid-area: view; position: relative; overflow: hidden; min-width: 0; }
.scene { width: 100%; height: 100%; }
.planes path { fill: #a8cbd7; fill-opacity: .12; stroke: #7f9dbd; stroke-opacity: .6; stroke-width: 2; }
.plane-name { font: 500 15px Roboto, sans-serif; fill: #324f96; }
.faint { font-size: 13px; font-weight: 400; fill: #8099b9; }
.part path, .part ellipse { stroke: #122a3b; stroke-width: 4; stroke-linejoin: round; }
.part path[stroke="none"] { stroke: none; }
.flyout { position: absolute; left: 0; top: 273px; width: 30px; height: 32px; background: #fff; border: 1px solid #999; border-left: 0; }
.cube { position: absolute; right: -2px; top: 5px; }
.face { font: 500 9px Roboto, sans-serif; fill: #222; }
.axis { font: 700 12px Roboto, sans-serif; }
.z { fill: #4b45b5; }
.x { fill: #b8284c; }
.view-menu { position: absolute; right: 18px; top: 136px; gap: 6px; }
.dock { position: absolute; right: 0; top: 226px; width: 29px; border: 1px solid #888; border-right: 0; background: #fff; }
.dock button { width: 100%; height: 31px; }
.dock button + button { border-top: 1px solid #888; }
.measure { position: absolute; right: 11px; bottom: 5px; display: flex; gap: 15px; }

.tabs { grid-area: tabs; display: flex; background: #c4c4c4; color: #555; border-bottom: 1px solid #999; border-bottom-right-radius: 8px; overflow: hidden; }
.add { width: 37px; flex: none; padding-right: 5px; background: #d0d0d0; }
.tab { flex: none; gap: 3px; padding: 0 66px 0 10px; margin: 0 2px 2px 0; background: #e8e8e8; border-radius: 0 0 4px 4px; white-space: nowrap; }
.active { flex: 1 0 auto; justify-content: flex-start; margin: 0; padding-right: 10px; background: #fff; color: #222; border-bottom: 2px solid #1b3f8a; }
```
